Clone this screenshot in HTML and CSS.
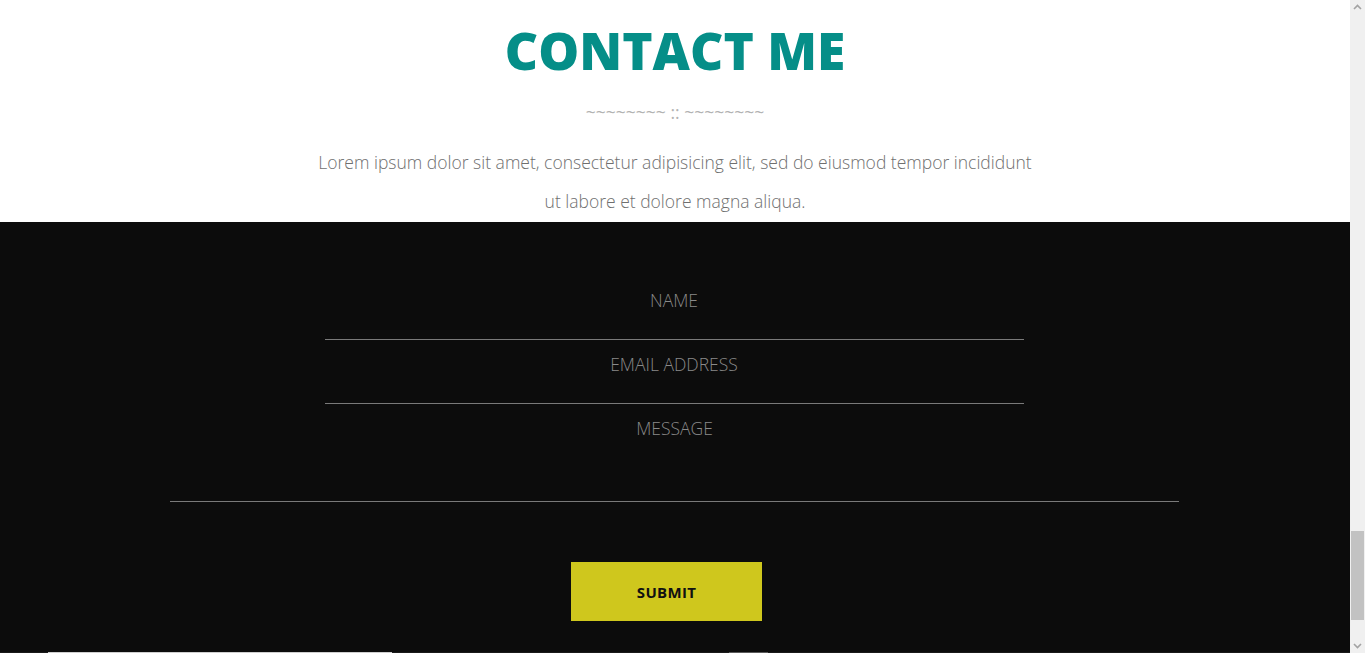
FILE: index.html
```html
<!DOCTYPE html>
<html lang="en">
<head>
<meta charset="utf-8">
<title>Contact Me</title>
<link rel="stylesheet" href="styles.css">
</head>
<body>
<div class="page">
  <main class="main">
    <section class="intro">
      <h1 class="title">CONTACT ME</h1>
      <div class="divider">~~~~~~~~ :: ~~~~~~~~</div>
      <p class="lead">Lorem ipsum dolor sit amet, consectetur adipisicing elit, sed do eiusmod tempor incididunt ut labore et dolore magna aliqua.</p>
    </section>
    <section class="contact">
      <form class="form">
        <input class="field" type="text" placeholder="NAME">
        <input class="field" type="email" placeholder="EMAIL ADDRESS">
        <textarea class="field message" placeholder="MESSAGE"></textarea>
        <div class="actions">
          <button class="submit" type="button">SUBMIT</button>
        </div>
      </form>
      <div class="next-row">
        <span class="bar bar-light"></span>
        <span class="bar bar-dim"></span>
      </div>
    </section>
  </main>
  <aside class="scrollbar">
    <svg class="arrow" width="15" height="15" viewBox="0 0 15 15"><path d="M4 9 L7.5 5.5 L11 9" fill="none" stroke="#a3a3a3" stroke-width="1.6"/></svg>
    <div class="track"><div class="thumb"></div></div>
    <svg class="arrow" width="15" height="15" viewBox="0 0 15 15"><path d="M4 6 L7.5 9.5 L11 6" fill="none" stroke="#a3a3a3" stroke-width="1.6"/></svg>
  </aside>
</div>
</body>
</html>
```

FILE: styles.css
```css
html, body {
  margin: 0;
  padding: 0;
  height: 100%;
  overflow: hidden;
}
body {
  font-family: "Open Sans", "Liberation Sans", sans-serif;
  background: #ffffff;
}
.page {
  display: flex;
  height: 100vh;
}
.main {
  flex: 1;
  min-width: 0;
  display: flex;
  flex-direction: column;
}
.intro {
  background: #ffffff;
  text-align: center;
  padding-top: 24px;
  height: 198px;
}
.title {
  margin: 0;
  font-size: 51.5px;
  line-height: 52px;
  font-weight: 800;
  color: #058e88;
}
.divider {
  margin-top: 26px;
  font-size: 17.5px;
  line-height: 20px;
  color: #b3b3b3;
}
.lead {
  margin: 21px auto 0;
  max-width: 722px;
  font-size: 17.5px;
  line-height: 39px;
  font-weight: 300;
  color: #6f6f6f;
}
.contact {
  flex: 1;
  background: #0c0c0c;
  padding-top: 54px;
  display: flex;
  flex-direction: column;
}
.form {
  display: flex;
  flex-direction: column;
  align-items: center;
}
.field {
  display: block;
  box-sizing: border-box;
  width: 699px;
  height: 64px;
  margin: 0 2px 0 0;
  padding: 14px 0 0;
  border: 0;
  border-bottom: 1px solid #7a7a7a;
  background: transparent;
  font-family: "Open Sans", "Liberation Sans", sans-serif;
  font-size: 17.5px;
  font-weight: 300;
  line-height: 20px;
  color: #cccccc;
  text-align: center;
  outline: none;
  resize: none;
}
input.field {
  padding: 0 0 16px;
}
.field::placeholder {
  color: #8a8a8a;
  opacity: 1;
}
.message {
  width: 1009px;
  height: 98px;
  margin-right: 1px;
}
.actions {
  margin-top: 60px;
  display: flex;
  justify-content: center;
  width: 100%;
}
.submit {
  width: 191px;
  height: 59px;
  margin-right: 17px;
  border: 0;
  background: #cfc71d;
  color: #111111;
  font-family: "Open Sans", "Liberation Sans", sans-serif;
  font-size: 15px;
  font-weight: 700;
  letter-spacing: 0.3px;
  cursor: pointer;
}
.next-row {
  margin-top: 31px;
  height: 1px;
  background: #1a1a1a;
  display: flex;
}
.bar {
  display: block;
  height: 1px;
}
.bar-light {
  margin-left: 48px;
  width: 344px;
  background: #cfcfcf;
}
.bar-dim {
  margin-left: 337px;
  width: 39px;
  background: #5a5a5a;
}
.scrollbar {
  width: 15px;
  height: 100vh;
  background: #f0f0f0;
  display: flex;
  flex-direction: column;
}
.arrow {
  display: block;
  flex: none;
}
.track {
  flex: 1;
  display: flex;
  flex-direction: column;
  justify-content: flex-end;
  padding-bottom: 18px;
}
.thumb {
  height: 89px;
  margin: 0 1px;
  background: #c2c2c2;
}
```
